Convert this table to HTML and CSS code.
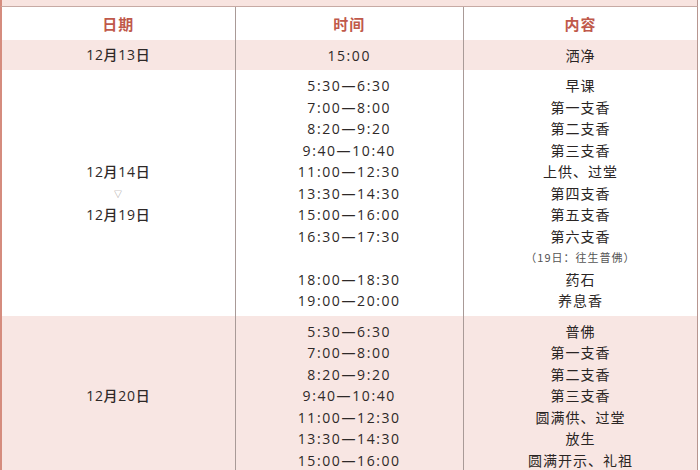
FILE: index.html
```html
<!DOCTYPE html>
<html lang="zh">
<head>
<meta charset="utf-8">
<link rel="stylesheet" href="styles.css">
</head>
<body>
<div class="topband"></div>
<table class="sched">
  <colgroup><col class="c1"><col class="c2"><col class="c3"></colgroup>
  <thead>
    <tr class="head"><th>日期</th><th>时间</th><th>内容</th></tr>
  </thead>
  <tbody>
    <tr class="pink single">
      <td class="date">12月13日</td>
      <td class="time">15:00</td>
      <td class="cont">洒净</td>
    </tr>
    <tr class="white multi">
      <td class="date">12月14日<div class="tri">▽</div>12月19日</td>
      <td class="time">
        <div class="ln">5:30—6:30</div>
        <div class="ln">7:00—8:00</div>
        <div class="ln">8:20—9:20</div>
        <div class="ln">9:40—10:40</div>
        <div class="ln">11:00—12:30</div>
        <div class="ln">13:30—14:30</div>
        <div class="ln">15:00—16:00</div>
        <div class="ln">16:30—17:30</div>
        <div class="ln"></div>
        <div class="ln">18:00—18:30</div>
        <div class="ln">19:00—20:00</div>
      </td>
      <td class="cont">
        <div class="ln">早课</div>
        <div class="ln">第一支香</div>
        <div class="ln">第二支香</div>
        <div class="ln">第三支香</div>
        <div class="ln">上供、过堂</div>
        <div class="ln">第四支香</div>
        <div class="ln">第五支香</div>
        <div class="ln">第六支香</div>
        <div class="ln note">（19日：往生普佛）</div>
        <div class="ln">药石</div>
        <div class="ln">养息香</div>
      </td>
    </tr>
    <tr class="pink multi">
      <td class="date">12月20日</td>
      <td class="time">
        <div class="ln">5:30—6:30</div>
        <div class="ln">7:00—8:00</div>
        <div class="ln">8:20—9:20</div>
        <div class="ln">9:40—10:40</div>
        <div class="ln">11:00—12:30</div>
        <div class="ln">13:30—14:30</div>
        <div class="ln">15:00—16:00</div>
      </td>
      <td class="cont">
        <div class="ln">普佛</div>
        <div class="ln">第一支香</div>
        <div class="ln">第二支香</div>
        <div class="ln">第三支香</div>
        <div class="ln">圆满供、过堂</div>
        <div class="ln">放生</div>
        <div class="ln">圆满开示、礼祖</div>
      </td>
    </tr>
  </tbody>
</table>
</body>
</html>
```
FILE: styles.css
```css
html, body {
  margin: 0;
  padding: 0;
  background: #ffffff;
}
body {
  width: 700px;
  height: 470px;
  overflow: hidden;
  font-family: "Open Sans", "Noto Sans CJK SC", sans-serif;
  color: #2e2928;
}
.topband {
  height: 6px;
  background: #f8e4e0;
  border-bottom: 1px solid #c7aaa4;
  border-left: 2px solid #d58c7e;
  border-right: 1px solid #b79690;
  width: 695px;
}
.sched {
  border-collapse: collapse;
  table-layout: fixed;
  width: 698px;
  border-left: 2px solid #d58c7e;
  border-right: 1px solid #b79690;
}
.c1 { width: 234px; }
.c2 { width: 228px; }
.c3 { width: 234px; }
.sched th, .sched td {
  border-left: 1px solid #a99a97;
  padding: 0;
  text-align: center;
  vertical-align: middle;
}
.sched th:first-child, .sched td:first-child {
  border-left: none;
}
.head th {
  height: 33px;
  font-family: "Noto Sans CJK SC", sans-serif;
  font-weight: 700;
  font-size: 15px;
  letter-spacing: 1px;
  color: #c0594b;
  background: #ffffff;
}
.pink { background: #f8e6e3; }
.white { background: #ffffff; }
.single td {
  height: 30px;
}
.multi td {
  padding: 5px 0 4px;
}
.date {
  font-size: 14px;
  font-weight: 500;
  letter-spacing: 0.7px;
  line-height: 21.5px;
}
.tri {
  font-size: 8px;
  color: #9a9090;
  line-height: 21.5px;
}
.time {
  font-size: 14px;
  font-weight: 500;
  letter-spacing: 1.6px;
}
.cont {
  font-family: "Noto Sans CJK SC", sans-serif;
  font-size: 14px;
  font-weight: 400;
  letter-spacing: 1px;
  color: #2a2524;
}
.ln {
  height: 21.5px;
  line-height: 21.5px;
}
.note {
  font-size: 11px;
  letter-spacing: 1px;
  color: #555;
}
```
